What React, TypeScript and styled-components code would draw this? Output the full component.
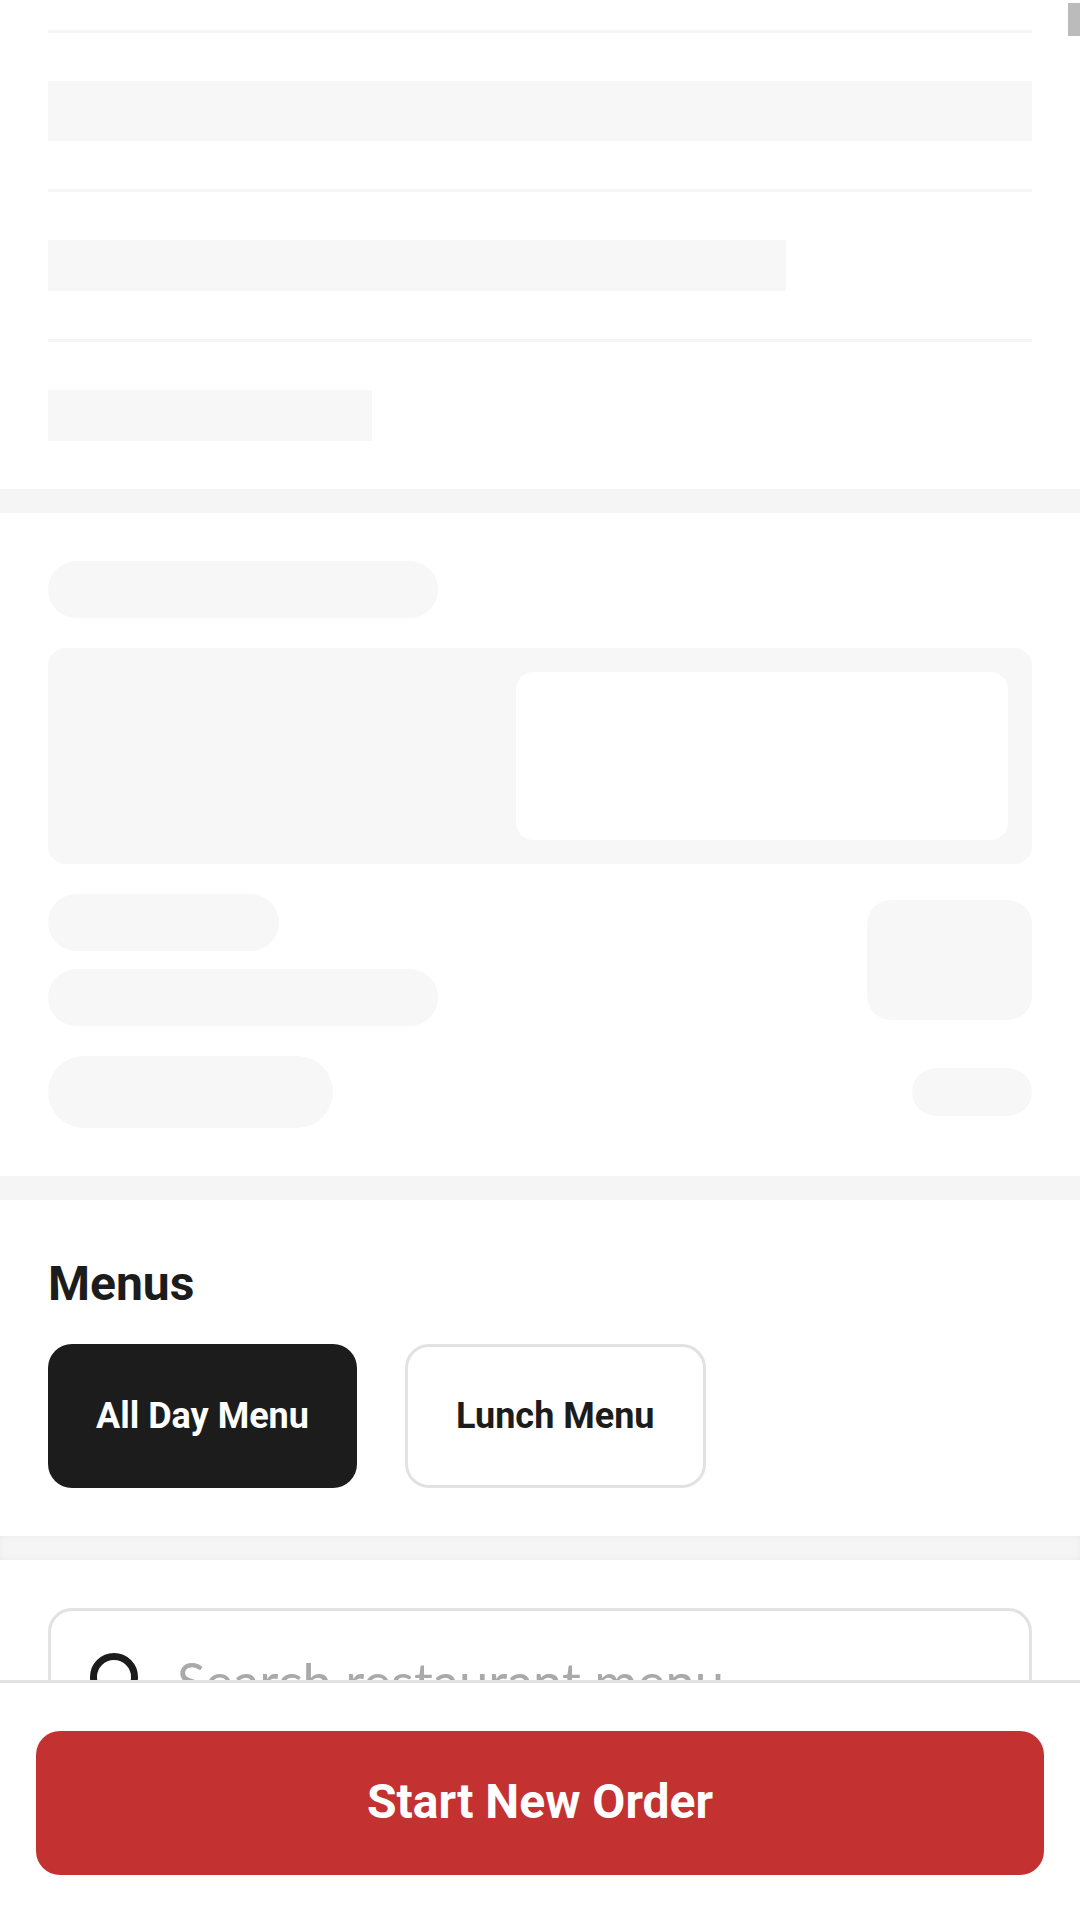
import React from "react";
import styled, { createGlobalStyle } from "styled-components";

const GlobalStyle = createGlobalStyle`
  html, body {
    margin: 0;
    padding: 0;
    background: #fff;
  }
  * {
    box-sizing: border-box;
  }
`;

const Page = styled.div`
  position: relative;
  width: 1080px;
  height: 1920px;
  display: flex;
  flex-direction: column;
  overflow: hidden;
  background: #fff;
  font-family: Roboto, "Liberation Sans", sans-serif;
  color: #1c1c1c;
`;

const Scroller = styled.main`
  flex: 1;
  min-height: 0;
  overflow: hidden;
`;

const ScrollThumb = styled.div`
  position: absolute;
  top: 3px;
  right: 0;
  width: 12px;
  height: 33px;
  background: #bbb;
`;

const Section = styled.section<{ $pad?: string }>`
  padding: ${(p) => p.$pad || "48px"};
`;

const SectionGap = styled.div<{ $shadow?: boolean }>`
  height: 24px;
  background: #f5f5f5;
  box-shadow: ${(p) => (p.$shadow ? "inset 0 0 6px rgba(0, 0, 0, 0.05)" : "none")};
`;

const Divider = styled.div`
  height: 3px;
  background: #f5f5f5;
`;

const TextBone = styled.div<{ $w: string; $h: number; $top: number }>`
  width: ${(p) => p.$w};
  height: ${(p) => p.$h}px;
  margin-top: ${(p) => p.$top}px;
  margin-bottom: 48px;
  background: #f7f7f7;
`;

const Pill = styled.div<{ $w: number; $h: number; $r?: number }>`
  width: ${(p) => p.$w}px;
  height: ${(p) => p.$h}px;
  border-radius: ${(p) => p.$r || 30}px;
  background: #f7f7f7;
`;

const Hero = styled.div`
  height: 216px;
  margin: 30px 0;
  padding: 24px;
  display: flex;
  justify-content: flex-end;
  border-radius: 18px;
  background: #f7f7f7;
`;

const HeroInner = styled.div`
  width: 492px;
  border-radius: 18px;
  background: #fff;
`;

const InfoRow = styled.div`
  display: flex;
  justify-content: space-between;
  align-items: center;
`;

const InfoCol = styled.div`
  display: flex;
  flex-direction: column;
  gap: 18px;
`;

const PriceRow = styled(InfoRow)`
  margin-top: 30px;
`;

const Title = styled.h2`
  margin: 0 0 24px;
  font-size: 48px;
  line-height: 72px;
  font-weight: 700;
`;

const Tabs = styled.div`
  display: flex;
  gap: 48px;
`;

const Tab = styled.button<{ $active?: boolean }>`
  height: 144px;
  padding: 0 48px;
  border: ${(p) => (p.$active ? "0" : "3px solid #e2e2e2")};
  border-radius: 24px;
  background: ${(p) => (p.$active ? "#1c1c1c" : "#fff")};
  color: ${(p) => (p.$active ? "#fff" : "#1c1c1c")};
  font-family: inherit;
  font-size: 36px;
  font-weight: 700;
`;

const SearchBox = styled.div`
  height: 144px;
  padding: 0 39px;
  display: flex;
  align-items: center;
  gap: 39px;
  border: 3px solid #e2e2e2;
  border-radius: 24px;
`;

const SearchText = styled.span`
  font-family: Lato, sans-serif;
  font-size: 52.6px;
  font-weight: 400;
  color: #a9a9a9;
`;

const Footer = styled.footer`
  flex: none;
  height: 240px;
  padding: 48px 36px 45px;
  border-top: 3px solid #e2e2e2;
  background: #fff;
`;

const OrderButton = styled.button`
  width: 100%;
  height: 144px;
  padding: 0 0 3px;
  border: 0;
  border-radius: 24px;
  background: #c43131;
  color: #fff;
  font-family: inherit;
  font-size: 48px;
  font-weight: 700;
`;

function SearchIcon() {
  return (
    <svg width="48" height="54" viewBox="0 0 48 54" fill="none" stroke="#1c1c1c" strokeWidth="7">
      <circle cx="24" cy="24" r="20.5" />
      <path d="M39 39l12 12" />
    </svg>
  );
}

export default function App() {
  return (
    <Page>
      <GlobalStyle />
      <Scroller>
        <Section $pad="30px 48px 0">
          <Divider />
          <TextBone $w="100%" $h={60} $top={48} />
          <Divider />
          <TextBone $w="738px" $h={51} $top={48} />
          <Divider />
          <TextBone $w="324px" $h={51} $top={48} />
        </Section>
        <SectionGap />
        <Section>
          <Pill $w={390} $h={57} />
          <Hero>
            <HeroInner />
          </Hero>
          <InfoRow>
            <InfoCol>
              <Pill $w={231} $h={57} />
              <Pill $w={390} $h={57} />
            </InfoCol>
            <Pill $w={165} $h={120} $r={24} />
          </InfoRow>
          <PriceRow>
            <Pill $w={285} $h={72} $r={36} />
            <Pill $w={120} $h={48} $r={24} />
          </PriceRow>
        </Section>
        <SectionGap />
        <Section>
          <Title>Menus</Title>
          <Tabs>
            <Tab $active>All Day Menu</Tab>
            <Tab>Lunch Menu</Tab>
          </Tabs>
        </Section>
        <SectionGap $shadow />
        <Section>
          <SearchBox>
            <SearchIcon />
            <SearchText>Search restaurant menu</SearchText>
          </SearchBox>
        </Section>
      </Scroller>
      <ScrollThumb />
      <Footer>
        <OrderButton>Start New Order</OrderButton>
      </Footer>
    </Page>
  );
}
